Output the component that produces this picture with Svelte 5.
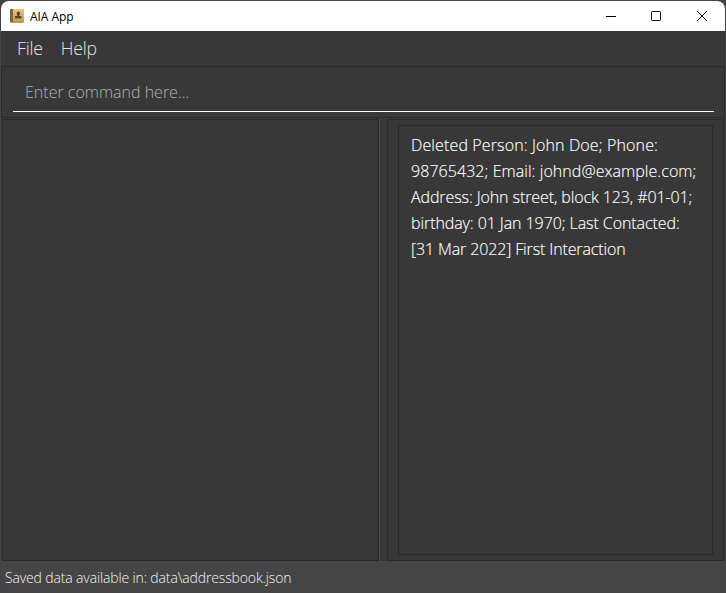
<script>
  const menus = [
    { label: 'File', spacing: '-0.15px' },
    { label: 'Help', spacing: '-0.2px' }
  ];
  const lines = [
    { text: 'Deleted Person: John Doe; Phone:', spacing: '0.125px' },
    { text: '98765432; Email: johnd@example.com;', spacing: '0.06px' },
    { text: 'Address: John street, block 123, #01-01;', spacing: '-0.1px' },
    { text: 'birthday: 01 Jan 1970; Last Contacted:', spacing: '-0.08px' },
    { text: '[31 Mar 2022] First Interaction', spacing: '-0.13px' }
  ];
</script>

<div class="desktop">
  <div class="window">
    <header>
      <svg class="logo" width="16" height="16" viewBox="0 0 16 16">
        <defs>
          <linearGradient id="cover" x1="0" y1="0" x2="0" y2="1">
            <stop offset="0" stop-color="#e8c27c" />
            <stop offset="1" stop-color="#cf9c4c" />
          </linearGradient>
        </defs>
        <rect x="1" y="1" width="14" height="13.5" rx="0.8" fill="url(#cover)" />
        <path d="M1.800 1h2.200v13.500H1.800a.8.8 0 0 1-.8-.8V1.800a.8.8 0 0 1 .8-.8z" fill="#7d6345" />
        <path d="M4 14H14.500" stroke="#a87838" />
        <path d="M7.600 5.300a1.700 1.700 0 0 1 3.400 0c0 1-.7 1.500-.7 2.700h2.200v2.500H6V8h2.300c0-1.200-.7-1.700-.7-2.700z" fill="#5a472b" />
      </svg>
      <span class="title">AIA App</span>
      <div class="controls">
        <svg width="12" height="12" viewBox="0 0 12 12"><path d="M1 6.500h10" /></svg>
        <svg width="12" height="12" viewBox="0 0 12 12"><rect x="1.500" y="1.500" width="9" height="9" rx="1" /></svg>
        <svg width="12" height="12" viewBox="0 0 12 12"><path d="M1 1l10 10M11 1L1 11" /></svg>
      </div>
    </header>
    <nav>
      {#each menus as menu}
        <span style:letter-spacing={menu.spacing}>{menu.label}</span>
      {/each}
    </nav>
    <section class="command">
      <div class="field"><span>Enter command here...</span></div>
    </section>
    <main>
      <div class="list"></div>
      <div class="divider"></div>
      <div class="result">
        <div class="output">
          {#each lines as line}
            <div><span style:letter-spacing={line.spacing}>{line.text}</span></div>
          {/each}
        </div>
      </div>
    </main>
    <footer><span>Saved data available in: data\addressbook.json</span></footer>
  </div>
</div>

<style>
  .desktop {
    box-sizing: border-box;
    width: 726px;
    height: 593px;
    padding: 1px;
    background: #444;
    font-family: 'Open Sans', 'Noto Sans', sans-serif;
    font-weight: 300;
    white-space: pre;
    overflow: hidden;
  }
  .window {
    display: flex;
    flex-direction: column;
    height: 591px;
    border-radius: 8px;
    overflow: hidden;
    background: #383838;
  }
  header {
    display: flex;
    align-items: center;
    flex: none;
    height: 30px;
    padding: 0 17px 0 8px;
    box-sizing: border-box;
    background: #fff;
    color: #000;
  }
  .title {
    margin-left: 5px;
    font-size: 12px;
    font-weight: 400;
    letter-spacing: -0.05px;
  }
  .logo {
    margin-top: -1px;
  }
  .controls {
    display: flex;
    gap: 33px;
    margin-left: auto;
  }
  .controls svg {
    fill: none;
    stroke: #000;
    stroke-width: 1;
  }
  .controls svg:last-child {
    margin-left: 1px;
  }
  nav {
    display: flex;
    gap: 18px;
    flex: none;
    height: 35px;
    padding-left: 16px;
    line-height: 35px;
    font-size: 17.6px;
    color: #e4e4e4;
  }
  .command {
    flex: none;
    box-sizing: border-box;
    height: 52px;
    padding: 0 10px 0 11px;
    border: 1px solid #2b2b2b;
  }
  .field {
    box-sizing: border-box;
    height: 45px;
    padding-left: 12px;
    border-bottom: 1px solid #fff;
    line-height: 50px;
    font-size: 16px;
    color: #b0b0b0;
  }
  main {
    display: flex;
    flex: none;
    height: 442px;
    margin: 1px 1px 0;
  }
  .list {
    box-sizing: border-box;
    width: 377px;
    border: 1px solid #2b2b2b;
  }
  .divider {
    box-sizing: border-box;
    width: 8px;
    border-left: 1px solid #4b4b4b;
  }
  .result {
    box-sizing: border-box;
    flex: 1;
    padding: 5px 10px;
    border: 1px solid #2b2b2b;
  }
  .output {
    box-sizing: border-box;
    height: 430px;
    padding: 6px 12px;
    border: 1px solid #2b2b2b;
    line-height: 26px;
    font-size: 16px;
    color: #fff;
    -webkit-text-stroke: 0.15px #fff;
  }
  footer {
    flex: 1;
    padding-left: 4px;
    background: #454545;
    line-height: 33px;
    font-size: 14px;
    letter-spacing: -0.14px;
    color: #f4f4f4;
  }
</style>
